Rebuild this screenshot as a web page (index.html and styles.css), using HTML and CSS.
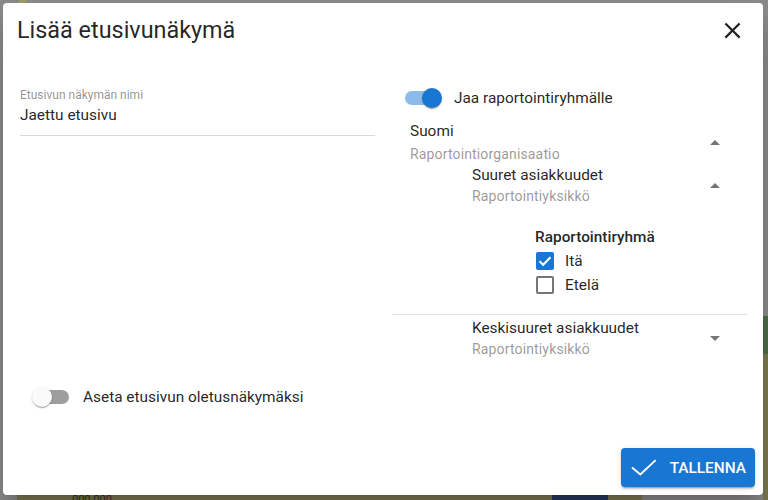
FILE: index.html
```html
<!DOCTYPE html>
<html lang="fi">
<head>
<meta charset="utf-8">
<title>Lisää etusivunäkymä</title>
<link rel="stylesheet" href="styles.css">
</head>
<body>
<div class="page">
  <!-- dimmed page behind the modal -->
  <div class="backdrop">
    <div class="bg-chip bg-chip-top"></div>
    <div class="bg-band-bottom">
      <span class="bg-number">000 000</span>
      <span class="bg-navy"></span>
    </div>
    <div class="bg-edge-right">
      <span class="bg-green"></span>
    </div>
  </div>

  <div class="dialog" role="dialog" aria-labelledby="dlg-title">
    <header class="dlg-head">
      <h2 class="dlg-title" id="dlg-title">Lisää etusivunäkymä</h2>
      <button class="icon-btn" type="button" aria-label="Sulje">
        <svg class="close-icon" viewBox="0 0 24 24" aria-hidden="true"><path d="M19 6.41 17.59 5 12 10.59 6.41 5 5 6.41 10.59 12 5 17.59 6.41 19 12 13.41 17.59 19 19 17.59 13.41 12z"/></svg>
      </button>
    </header>

    <div class="dlg-body">
      <div class="col col-left">
        <div class="field">
          <label class="field-label">Etusivun näkymän nimi</label>
          <div class="field-input">Jaettu etusivu</div>
        </div>

        <label class="switch-row switch-row-default">
          <span class="switch">
            <span class="switch-track"></span>
            <span class="switch-thumb"></span>
          </span>
          <span class="switch-label">Aseta etusivun oletusnäkymäksi</span>
        </label>
      </div>

      <div class="col col-right">
        <label class="switch-row switch-row-share">
          <span class="switch is-on">
            <span class="switch-track"></span>
            <span class="switch-thumb"></span>
          </span>
          <span class="switch-label">Jaa raportointiryhmälle</span>
        </label>

        <div class="tree-item level-0 first">
          <div class="tree-text">
            <div class="tree-primary">Suomi</div>
            <div class="tree-secondary">Raportointiorganisaatio</div>
          </div>
          <svg class="arrow" viewBox="7 9 10 5" aria-hidden="true"><path d="M7 14l5-5 5 5z"/></svg>
        </div>

        <div class="tree-item level-1 open">
          <div class="tree-text">
            <div class="tree-primary">Suuret asiakkuudet</div>
            <div class="tree-secondary">Raportointiyksikkö</div>
          </div>
          <svg class="arrow" viewBox="7 9 10 5" aria-hidden="true"><path d="M7 14l5-5 5 5z"/></svg>
        </div>

        <div class="group">
          <div class="group-title">Raportointiryhmä</div>
          <label class="check-row">
            <span class="checkbox is-checked">
              <svg viewBox="0 0 18 18" aria-hidden="true"><polyline points="3.5,9.2 7.2,12.8 14.5,5.2"/></svg>
            </span>
            <span>Itä</span>
          </label>
          <label class="check-row">
            <span class="checkbox"></span>
            <span>Etelä</span>
          </label>
        </div>

        <div class="tree-item level-1 closed">
          <div class="tree-text">
            <div class="tree-primary">Keskisuuret asiakkuudet</div>
            <div class="tree-secondary">Raportointiyksikkö</div>
          </div>
          <svg class="arrow" viewBox="7 10 10 5" aria-hidden="true"><path d="M7 10l5 5 5-5z"/></svg>
        </div>
      </div>
    </div>

    <footer class="dlg-actions">
      <button class="btn-save" type="button">
        <svg class="btn-icon" viewBox="0 0 26 17" aria-hidden="true"><polyline points="1,8.5 9.5,15.5 25,1"/></svg>
        <span>TALLENNA</span>
      </button>
    </footer>
  </div>
</div>
</body>
</html>
```

FILE: styles.css
```css
* {
  box-sizing: border-box;
}

html,
body {
  margin: 0;
  padding: 0;
}

body {
  font-family: Roboto, "Liberation Sans", Arial, sans-serif;
  color: rgba(0, 0, 0, 0.87);
  background: #8a8a8a;
}

.page {
  position: relative;
  width: 768px;
  height: 500px;
  overflow: hidden;
}

/* ---- dimmed page behind the modal ---- */
.backdrop {
  position: absolute;
  inset: 0;
  background: #8a8a8a;
}

.bg-chip-top {
  position: absolute;
  left: 19px;
  top: 0;
  width: 7px;
  height: 3px;
  background: #a09a6a;
}

.bg-band-bottom {
  position: absolute;
  left: 17px;
  bottom: 0;
  width: 625px;
  height: 6px;
  background: #7b7850;
}

.bg-number {
  position: absolute;
  left: 55px;
  top: 0;
  font-size: 11px;
  line-height: 11px;
  color: #2d2d22;
}

.bg-navy {
  position: absolute;
  left: 535px;
  top: 0;
  width: 56px;
  height: 6px;
  background: #23385f;
}

.bg-edge-right {
  position: absolute;
  right: 0;
  top: 354px;
  width: 5px;
  bottom: 0;
  background: #7b7850;
}

.bg-green {
  position: absolute;
  left: 0;
  top: -38px;
  width: 5px;
  height: 38px;
  background: #4b6d45;
}

/* ---- dialog ---- */
.dialog {
  position: absolute;
  left: 3px;
  top: 3px;
  width: 760px;
  height: 492px;
  background: #fff;
  border-radius: 4px;
  box-shadow: 0 11px 15px -7px rgba(0, 0, 0, 0.2), 0 24px 38px 3px rgba(0, 0, 0, 0.14);
  display: flex;
  flex-direction: column;
}

.dlg-head {
  display: flex;
  align-items: center;
  justify-content: space-between;
  padding: 11px 17px 0 14px;
}

.dlg-title {
  margin: 0;
  font-size: 23.4px;
  font-weight: 400;
  line-height: 32px;
  letter-spacing: 0;
  color: rgba(0, 0, 0, 0.87);
}

.icon-btn {
  border: 0;
  background: none;
  padding: 0;
  width: 27px;
  height: 27px;
  display: flex;
  cursor: pointer;
}

.close-icon {
  width: 27px;
  height: 27px;
  fill: rgba(0, 0, 0, 0.87);
}

.dlg-body {
  display: grid;
  grid-template-columns: 355px 355px;
  column-gap: 17px;
  padding: 40px 16px 0 17px;
}

.col {
  display: flex;
  flex-direction: column;
}

/* text field */
.field {
  margin-top: 1px;
}

.field-label {
  display: block;
  font-size: 12px;
  line-height: 16px;
  color: rgba(0, 0, 0, 0.45);
}

.field-input {
  margin-top: 2px;
  padding-bottom: 10px;
  font-size: 15.4px;
  line-height: 20px;
  border-bottom: 1px solid #d9d9d9;
}

/* switches */
.switch-row {
  display: flex;
  align-items: center;
  font-size: 15.4px;
  cursor: pointer;
}

.switch-row-default {
  margin-top: 242px;
  height: 38px;
  padding-left: 12px;
}

.switch-row-default .switch-label {
  margin-left: 14px;
}

.switch-row-share {
  height: 24px;
  padding-left: 13px;
}

.switch-row-share .switch-label {
  margin-left: 12px;
}

.switch {
  position: relative;
  width: 37px;
  height: 20px;
  flex: none;
  display: flex;
  align-items: center;
}

.switch-track {
  margin-left: 3px;
  width: 34px;
  height: 14px;
  border-radius: 7px;
  background: #9e9e9e;
}

.switch-thumb {
  position: absolute;
  left: 0;
  top: 0;
  width: 20px;
  height: 20px;
  border-radius: 50%;
  background: #fafafa;
  box-shadow: 0 2px 1px -1px rgba(0, 0, 0, 0.2), 0 1px 1px 0 rgba(0, 0, 0, 0.14), 0 1px 3px 0 rgba(0, 0, 0, 0.12);
}

.switch.is-on .switch-track {
  margin-left: 0;
  background: #8dbbe9;
}

.switch.is-on .switch-thumb {
  left: 17px;
  background: #1976d2;
}

/* tree of reporting units */
.tree-item {
  display: flex;
  align-items: center;
  padding-right: 27px;
}

.tree-item.level-0 {
  padding-left: 18px;
  margin-top: 10px;
}

.tree-item.level-1 {
  padding-left: 80px;
}

.tree-text {
  flex: 1;
}

.tree-primary {
  font-size: 15.4px;
  line-height: 22px;
}

.tree-secondary {
  font-size: 14px;
  line-height: 20px;
  letter-spacing: 0.01071em;
  color: rgba(0, 0, 0, 0.42);
}

.level-0 .tree-secondary {
  margin-top: 2px;
}

.arrow {
  width: 10px;
  height: 5px;
  fill: rgba(0, 0, 0, 0.54);
  flex: none;
}

.group {
  padding-left: 143px;
  margin-top: 19px;
  padding-bottom: 17px;
  border-bottom: 1px solid #e0e0e0;
  margin-bottom: 2px;
}

.group-title {
  font-size: 15.4px;
  font-weight: 500;
  line-height: 24px;
}

.check-row {
  display: flex;
  align-items: center;
  height: 24px;
  font-size: 15.4px;
  cursor: pointer;
}

.checkbox {
  width: 18px;
  height: 18px;
  margin-left: 1px;
  margin-right: 11px;
  border: 2px solid rgba(0, 0, 0, 0.54);
  border-radius: 2px;
  display: flex;
}

.checkbox.is-checked {
  border: 0;
  background: #1976d2;
}

.checkbox svg {
  width: 18px;
  height: 18px;
  fill: none;
  stroke: #fff;
  stroke-width: 2;
}

/* footer */
.dlg-actions {
  margin-top: auto;
  display: flex;
  justify-content: flex-end;
  padding: 8px;
}

.btn-save {
  display: flex;
  align-items: center;
  width: 134px;
  height: 39px;
  padding: 0 9px 0 10px;
  border: 0;
  border-radius: 4px;
  background: #1976d2;
  color: #fff;
  font-family: inherit;
  font-size: 15.4px;
  font-weight: 500;
  box-shadow: 0 3px 1px -2px rgba(0, 0, 0, 0.2), 0 2px 2px 0 rgba(0, 0, 0, 0.14), 0 1px 5px 0 rgba(0, 0, 0, 0.12);
  cursor: pointer;
}

.btn-icon {
  width: 26px;
  height: 17px;
  margin-right: 13px;
  fill: none;
  stroke: #fff;
  stroke-width: 2;
}
```
